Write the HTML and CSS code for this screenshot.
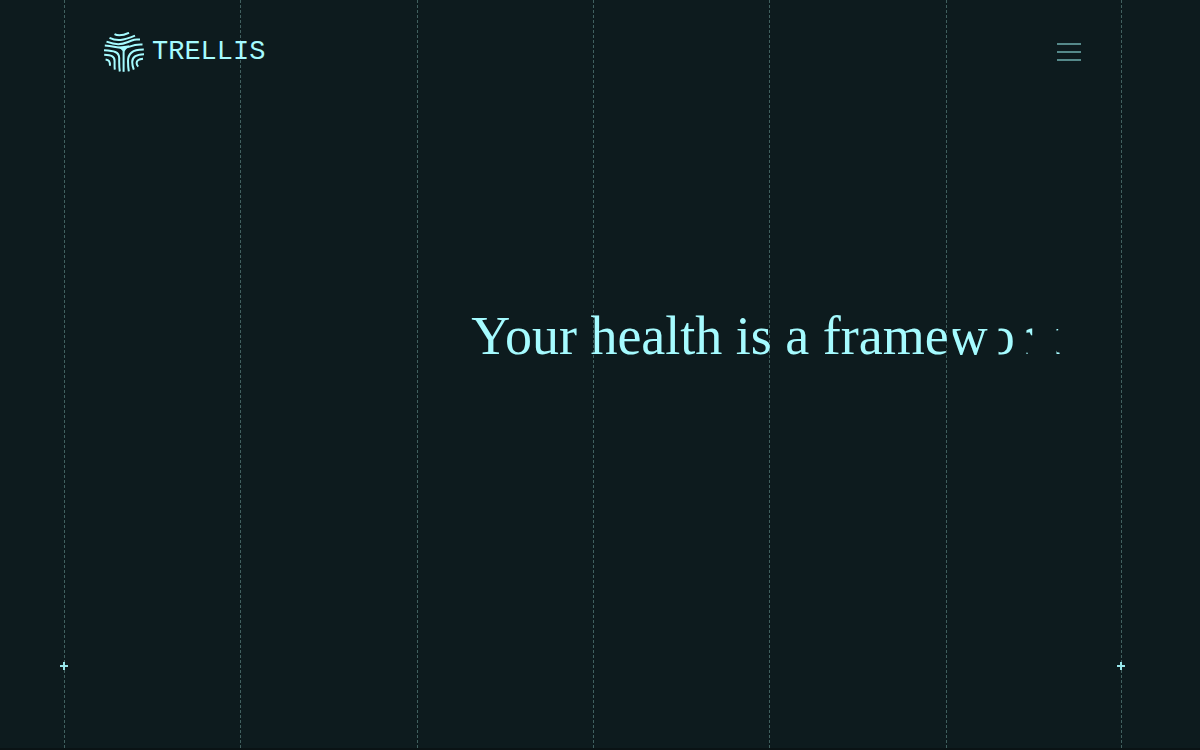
FILE: index.html
```html
<!DOCTYPE html>
<html lang="en">
<head>
    <meta charset="UTF-8">
    <meta name="viewport" content="width=device-width, initial-scale=1.0">
    <title>Trellis</title>
    <link rel="stylesheet" href="styles.css">
</head>
<body>
    <div class="page">
        <div class="lines">
            <span class="line"></span>
            <span class="line"></span>
            <span class="line"></span>
            <span class="line"></span>
            <span class="line"></span>
            <span class="line"></span>
        </div>

        <div class="content">
            <header class="header">
                <a class="brand" href="#">
                    <svg class="brand-mark" viewBox="0 0 40 40" aria-hidden="true">
                        <path d="M10.500 2.200C14 4 19 3.500 25 .8"/>
                        <path d="M5.500 5.800C13 9.500 19 8.500 31 3.600"/>
                        <path d="M2.500 9.600C12 13 17 13 24 10S31 7.400 36 7.600"/>
                        <path d="M.8 13.600C9 14 14 16 19.500 16S28 11.800 38.500 12.600"/>
                        <path d="M16.500 15.400L23 14.600L19.800 18.500Z" fill="#a5fbff"/>
                        <path d="M19.600 16V39.800"/>
                        <path d="M0 18.300C10 19 15 19.500 15.200 26C15.200 31 15 35 15.800 39.500"/>
                        <path d="M.2 22.800C7 23.300 10.600 23.800 10.600 29C10.600 32 10.400 35 10.800 37.600"/>
                        <path d="M1.600 27.500C5 28 6 29 6 33.800"/>
                        <path d="M39.800 17.600C28 17.400 24 22 24 29C24 33 24.200 36 24.800 39.400"/>
                        <path d="M40 22.200C31.500 22.400 28.200 25 28.200 30C28.200 33 28.800 35 29.800 37.600"/>
                        <path d="M39 26.800C34 27.300 32.600 29 32.600 31C32.600 32.500 33.200 33.600 34.200 34.600"/>
                    </svg>
                    <span class="brand-name">TRELLIS</span>
                </a>
                <button class="menu" type="button" aria-label="Menu">
                    <span class="menu-bar"></span>
                    <span class="menu-bar"></span>
                    <span class="menu-bar"></span>
                </button>
            </header>

            <main class="hero">
                <h1 class="headline">Your health is a frame<span class="letter letter-w">w</span><span class="letter letter-o">o</span><span class="letter letter-r">r</span><span class="letter letter-k">k</span></h1>
            </main>

            <div class="marks">
                <svg class="mark" viewBox="0 0 8 8" aria-hidden="true"><path d="M4 0V8M0 4H8"/></svg>
                <svg class="mark" viewBox="0 0 8 8" aria-hidden="true"><path d="M4 0V8M0 4H8"/></svg>
            </div>
        </div>
    </div>
</body>
</html>
```
FILE: styles.css
```css
* {
    box-sizing: border-box;
}

body {
    margin: 0;
    background-color: #0d1b1e;
    color: #a5fbff;
    font-family: "Liberation Serif", serif;
}

.page {
    display: grid;
    min-height: 100vh;
    padding: 0 79px 0 64px;
    border-bottom: 2px solid #0a1315;
}

/* guide lines and content share one cell */
.lines,
.content {
    grid-area: 1 / 1;
}

.lines {
    display: grid;
    grid-template-columns: repeat(6, 1fr);
    margin-right: -1px;
}

.line {
    border-left: 1px dashed #40605f;
}

.line:last-child {
    border-right: 1px dashed #40605f;
}

.content {
    display: flex;
    flex-direction: column;
}

.header {
    display: flex;
    align-items: center;
    justify-content: space-between;
    padding: 32px 40px;
}

.brand {
    display: flex;
    align-items: center;
    gap: 8px;
    color: inherit;
    text-decoration: none;
}

.brand-mark {
    width: 40px;
    height: 40px;
    fill: none;
    stroke: #a5fbff;
    stroke-width: 2;
}

.brand-name {
    font-family: "Liberation Mono", monospace;
    font-size: 27px;
    line-height: 40px;
}

.menu {
    display: flex;
    flex-direction: column;
    gap: 6px;
    padding: 0;
    border: none;
    background: none;
    cursor: pointer;
}

.menu-bar {
    width: 24px;
    height: 2px;
    background-color: #55898a;
}

.hero {
    flex: 1;
    display: grid;
    grid-template-columns: repeat(6, 1fr);
    align-items: center;
}

.headline {
    grid-column: 3 / -1;
    margin: 0;
    padding: 0 0 94px 55px;
    font-size: 54px;
    font-weight: normal;
    line-height: 64px;
    white-space: nowrap;
}

/* letters still being revealed, from right to left */
.letter {
    display: inline-block;
}

.letter-w {
    clip-path: inset(0 0 0 10%);
}

.letter-o {
    clip-path: inset(0 0 0 40%);
}

.letter-r {
    clip-path: inset(0 0 0 65%);
}

.letter-k {
    clip-path: inset(0 0 0 88%);
}

.marks {
    display: flex;
    justify-content: space-between;
    margin: 0 -4px;
    padding-bottom: 78px;
}

.mark {
    width: 8px;
    height: 8px;
    fill: none;
    stroke: #a5fbff;
    stroke-width: 2;
    opacity: 0.9;
}
```
